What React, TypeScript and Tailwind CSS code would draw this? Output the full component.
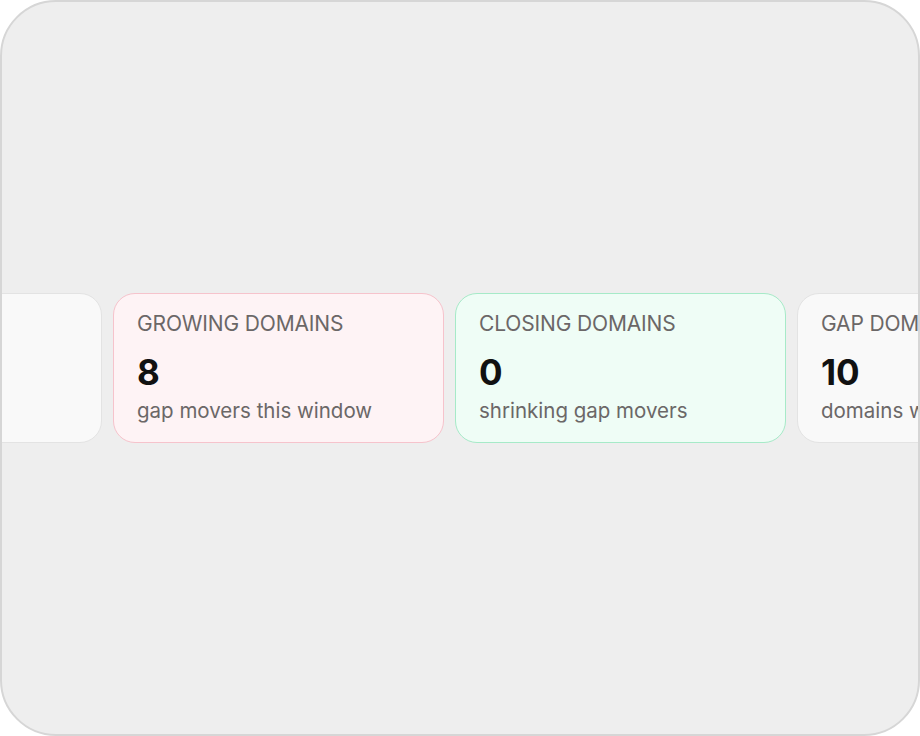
import React from "react";

type Stat = {
  label: string;
  value: string;
  note: string;
  tone: "neutral" | "rose" | "emerald";
};

const stats: Stat[] = [
  { label: "ALL DOMAINS", value: "64", note: "tracked now", tone: "neutral" },
  { label: "GROWING DOMAINS", value: "8", note: "gap movers this window", tone: "rose" },
  { label: "CLOSING DOMAINS", value: "0", note: "shrinking gap movers", tone: "emerald" },
  { label: "GAP DOMAINS", value: "10", note: "domains with open gaps", tone: "neutral" },
];

const toneClass: Record<Stat["tone"], string> = {
  neutral: "bg-[#f9f9f9] border-[#e3e3e3]",
  rose: "bg-[#fef3f5] border-[#f6c3cc]",
  emerald: "bg-[#effdf6] border-[#a6eac8]",
};

function StatCard({ stat }: { stat: Stat }) {
  return (
    <div
      className={`shrink-0 w-[331px] h-[150px] rounded-[22px] border px-[23px] pt-[16px] ${toneClass[stat.tone]}`}
    >
      <div className="text-[21px] leading-[28px] text-[#6b6767] tracking-[-0.15px] whitespace-nowrap">
        {stat.label}
      </div>
      <div className="mt-[14px] text-[35px] leading-[40px] font-bold text-[#111111]">{stat.value}</div>
      <div className="mt-[5px] text-[20.5px] leading-[28px] text-[#6b6767] whitespace-nowrap">
        {stat.note}
      </div>
    </div>
  );
}

export default function App() {
  return (
    <div
      className="w-[920px] h-[736px] bg-white"
      style={{ fontFamily: "Inter, 'Noto Sans', sans-serif" }}
    >
      <div className="w-full h-full rounded-[56px] border-2 border-[#d6d6d6] bg-[#eeeeee] overflow-hidden flex items-center">
        <div className="flex gap-[11px] -ml-[231px]">
          {stats.map((s) => (
            <StatCard key={s.label} stat={s} />
          ))}
        </div>
      </div>
    </div>
  );
}
